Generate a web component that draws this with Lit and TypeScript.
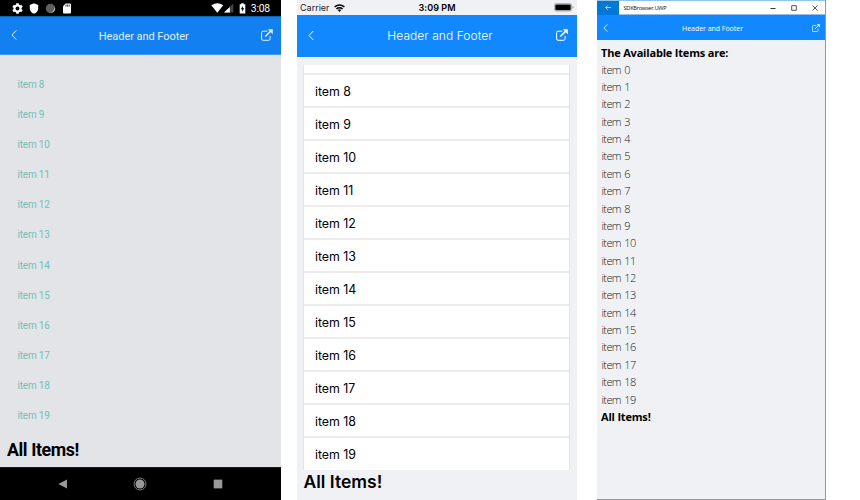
import { LitElement, html, svg, css } from "lit";
import { customElement } from "lit/decorators.js";

const range = (from: number, to: number) =>
  Array.from({ length: to - from + 1 }, (_, i) => `item ${from + i}`);

const chevron = html`<svg class="chevron" viewBox="0 0 6 10" fill="none" stroke="currentColor">
  <path d="M5.3.5 1 5l4.3 4.5" />
</svg>`;

const openIcon = html`<svg class="open" viewBox="0 0 12 12" fill="none" stroke="currentColor">
  <path d="M6.4 2.2H2Q.6 2.2.6 3.6V9.9q0 1.4 1.4 1.4H7.7q1.4 0 1.4-1.4V7" stroke-width="1" />
  <path d="M4.3 7.5 10 1.9" stroke-width="1.5" />
  <path d="M6.9.3h4.9v4.9Z" fill="currentColor" stroke="none" />
</svg>`;

const teeth = [0, 60, 120].map(
  (a) => svg`<rect x="4.1" y="0.3" width="2.8" height="10.4" transform="rotate(${a} 5.5 5.5)" />`
);

const base = css`
  :host { display: flex; flex-direction: column; box-sizing: border-box; height: 500px; overflow: hidden; }
  * { box-sizing: border-box; }
  svg { display: block; flex: none; }
  .bar { display: grid; align-items: center; color: #fff; flex: none; }
  .title { text-align: center; white-space: nowrap; }
  .row { white-space: pre; flex: none; display: flex; align-items: center; }
`;

@customElement("android-screen")
export class AndroidScreen extends LitElement {
  static styles = [base, css`
    :host { width: 281px; background: #e2e4e8; font-family: Roboto, sans-serif; }
    .status { height: 16px; flex: none; background: #000; display: flex; align-items: center; padding: 0 11px 0 12px; color: #fff; font-size: 10.4px; }
    .status .left { display: flex; align-items: center; gap: 6px; flex: 1; }
    .status .right { display: flex; align-items: center; }
    .time { margin-left: 4.5px; line-height: 16px; padding-top: 1px; letter-spacing: -.2px; }
    .bar { height: 39px; background: #1280f0; grid-template-columns: 20px 1fr 20px; padding: 0 8px 0 10.5px; border-top: 1px solid #0d60b4; border-bottom: 1px solid #4297ef; color: #e1effd; }
    .chevron { width: 6px; height: 10px; margin-top: -1px; }
    .open { width: 12px; height: 12px; justify-self: end; margin-top: -2px; }
    .title { font-size: 11px; letter-spacing: -.05px; padding-left: 4px; padding-top: 1px; }
    .items { padding: 14px 0 0 17.5px; flex: 1; }
    .row { height: 30.18px; font-size: 10px; letter-spacing: -.18px; color: #74c0b7; }
    .footer { height: 35px; padding: 0 0 0 7px; font-size: 17.8px; line-height: 35px; font-weight: 700; letter-spacing: -.4px; flex: none; }
    .nav { height: 33px; background: #000; border-top: 1px solid #1c1c1c; display: flex; align-items: center; justify-content: space-between; padding: 0 58px; flex: none; }
  `];
  render() {
    return html`
      <div class="status">
        <div class="left">
          <svg width="11" height="11" viewBox="0 0 11 11"><g fill="#fff">${teeth}<circle cx="5.5" cy="5.5" r="4" /></g><circle cx="5.5" cy="5.5" r="1.9" /></svg>
          <svg width="10" height="11" viewBox="0 0 10 11"><path fill="#fff" d="M5 .2 9.2 2v3.2C9.2 8 7.4 10 5 10.8 2.6 10 .8 8 .8 5.2V2Z" /></svg>
          <svg width="11" height="11" viewBox="0 0 11 11"><circle cx="5.5" cy="5.5" r="4.7" fill="#606060" /><path d="M9.9 4A4.7 4.7 0 0 1 5.2 10.1Q9.2 8.6 9.9 4Z" fill="#ccc" /></svg>
          <svg width="10" height="11" viewBox="0 0 10 11"><path fill="#fff" d="M3.6.4H8Q9 .4 9 1.4V9.6q0 1-1 1H2q-1 0-1-1V3.2Z" /><path stroke="#000" stroke-width=".8" d="M4 1.6v2M5.6 1.6v2M7.2 1.6v2" /></svg>
        </div>
        <div class="right">
          <svg width="13" height="10" viewBox="0 0 13 10"><path fill="#fff" d="M.3 2.2Q6.5-1.9 12.2 2.2L6.3 9.7Z" /></svg>
          <svg width="10" height="10" viewBox="0 0 10 10"><path fill="#444" d="M9.4.4v9.2H0Z" /><path fill="#fff" d="M5.8 3.9v5.7H0Z" /></svg>
          <svg width="7" height="11" viewBox="0 0 7 11" style="margin-left:5px"><path fill="#fff" d="M2.2.3h2.6v1h1.5v9.3H.7V1.3h1.5Z" /><path d="M4 2.8 1.7 6.3h1.5L3 8.8l2.3-3.6H3.8Z" /></svg>
          <span class="time">3:08</span>
        </div>
      </div>
      <div class="bar">${chevron}<span class="title">Header and Footer</span>${openIcon}</div>
      <div class="items">${range(8, 19).map((t) => html`<div class="row">${t}</div>`)}</div>
      <div class="footer">All Items!</div>
      <div class="nav">
        <svg width="9" height="10" viewBox="0 0 9 10"><path fill="#999" d="M.3 5 9 .5v9Z" /></svg>
        <svg width="14" height="14" viewBox="0 0 14 14"><circle cx="7" cy="7" r="4.5" fill="#999" /><circle cx="7" cy="7" r="6" fill="none" stroke="#999" stroke-width=".8" /></svg>
        <svg width="10" height="10" viewBox="0 0 10 10"><path fill="#999" d="M.7.6h8.6v8.8H.7Z" /></svg>
      </div>`;
  }
}

@customElement("ios-screen")
export class IosScreen extends LitElement {
  static styles = [base, css`
    :host { width: 280px; background: #f0f1f5; font-family: Inter, sans-serif; color: #000; }
    .status { height: 15px; flex: none; display: grid; grid-template-columns: 1fr auto 1fr; align-items: center; padding: 0 3px; font-size: 9px; color: #222; }
    .carrier { display: flex; align-items: center; gap: 4px; }
    .time { font-weight: 600; color: #000; font-size: 9px; letter-spacing: .05px; }
    .battery { justify-self: end; }
    .bar { height: 42px; background: #1288ff; grid-template-columns: 20px 1fr 20px; padding: 0 9px 2px 11px; }
    .chevron { width: 6px; height: 11px; margin-top: 1px; }
    .open { width: 12px; height: 12px; justify-self: end; }
    .title { font-size: 12px; font-weight: 350; letter-spacing: .07px; padding-left: 4px; }
    .list { margin: 8px 7px 0 6px; height: 404.5px; border: solid #e4e4e6; border-width: 0 1px; background: #fff; overflow: hidden; display: flex; flex-direction: column; }
    .partial, .row { border-bottom: 2px solid #ececee; flex: none; }
    .partial { height: 10px; }
    .row { height: 33px; padding: 1px 0 0 11px; font-size: 12.4px; letter-spacing: -.03px; }
    .row:last-child { border-bottom-color: transparent; }
    .footer { padding-left: 6.5px; font-size: 17.5px; line-height: 24px; font-weight: 600; }
  `];
  render() {
    return html`
      <div class="status">
        <div class="carrier">Carrier
          <svg width="11" height="8" viewBox="0 0 11 8" fill="none" stroke="#000" stroke-width="1.5"><path d="M.6 2.9Q5.5-1.1 10.4 2.9M2.4 4.9q3.1-2.5 6.2 0" /><path fill="#000" stroke="none" d="M3.7 6q1.8-1.3 3.6 0L5.5 7.9Z" /></svg>
        </div>
        <span class="time">3:09 PM</span>
        <svg class="battery" width="20" height="9" viewBox="0 0 20 9"><rect x=".4" y=".5" width="17.2" height="7.6" rx="1.8" fill="none" stroke="#999" stroke-width=".7" /><rect x="1.3" y="1.4" width="15.4" height="5.8" rx="1" /><path d="M18.5 3v2.6q1-.3 1-1.3t-1-1.3" fill="#888" /></svg>
      </div>
      <div class="bar">${chevron}<span class="title">Header and Footer</span>${openIcon}</div>
      <div class="list"><div class="partial"></div>${range(8, 19).map((t) => html`<div class="row">${t}</div>`)}</div>
      <div class="footer">All Items!</div>`;
  }
}

@customElement("uwp-window")
export class UwpWindow extends LitElement {
  static styles = [base, css`
    :host { width: 229px; background: #f0f1f5; font-family: "Open Sans", "Noto Sans", sans-serif; color: #000; border: solid #96979b; border-width: 0 1px 1px 0; }
    .caption { height: 15px; flex: none; display: flex; align-items: center; background: #fff; border-top: 1px solid #8fc4ee; border-bottom: 1px solid #98bfe0; font-size: 5.7px; color: #111; }
    .back { width: 21.5px; height: 14px; background: #0078d7; display: flex; align-items: center; justify-content: center; }
    .name { flex: 1; padding-left: 5px; letter-spacing: -.3px; }
    .controls { display: flex; gap: 15px; padding-right: 7px; }
    .bar { height: 25px; background: #1288ff; grid-template-columns: 15px 1fr 15px; padding: 1px 5px 0 6px; }
    .chevron { width: 5px; height: 8px; }
    .open { width: 8px; height: 8px; justify-self: end; }
    .title { font-size: 7px; letter-spacing: -.03px; padding-left: 2px; }
    .body { padding: 4px 0 0 4px; }
    .heading { font-size: 11px; line-height: 17px; font-weight: 700; letter-spacing: -.19px; white-space: nowrap; }
    .row { height: 17.37px; padding: 0 0 1px .5px; font-size: 11px; letter-spacing: -.62px; word-spacing: 1.1px; font-weight: 350; color: #222; }
  `];
  render() {
    return html`
      <div class="caption">
        <div class="back"><svg width="6" height="5" viewBox="0 0 6 5" fill="none" stroke="#d5eafa" stroke-width=".8"><path d="M6 2.5H.7M2.8.3.6 2.5l2.2 2.2" /></svg></div>
        <span class="name">SDKBrowser.UWP</span>
        <div class="controls">
          <svg width="6" height="6" viewBox="0 0 6 6" stroke="#333"><path d="M.5 3.5h5" /></svg>
          <svg width="6" height="6" viewBox="0 0 6 6" stroke="#444" fill="none"><path d="M.7.7h4.6v4.6H.7Z" stroke-width=".9" /></svg>
          <svg width="6" height="6" viewBox="0 0 6 6" stroke="#333" stroke-width=".8"><path d="m.5.5 5 5m0-5-5 5" /></svg>
        </div>
      </div>
      <div class="bar">${chevron}<span class="title">Header and Footer</span>${openIcon}</div>
      <div class="body">
        <div class="heading">The Available Items are:</div>
        ${range(0, 19).map((t) => html`<div class="row">${t}</div>`)}
        <div class="heading">All Items!</div>
      </div>`;
  }
}

@customElement("app-root")
export class AppRoot extends LitElement {
  static styles = css`
    :host { display: flex; width: 860px; height: 500px; background: #fff; overflow: hidden; }
    ios-screen { margin-left: 16px; }
    uwp-window { margin-left: 20px; }
    android-screen, ios-screen, uwp-window { flex: none; }
  `;
  render() {
    return html`<android-screen></android-screen><ios-screen></ios-screen><uwp-window></uwp-window>`;
  }
}
